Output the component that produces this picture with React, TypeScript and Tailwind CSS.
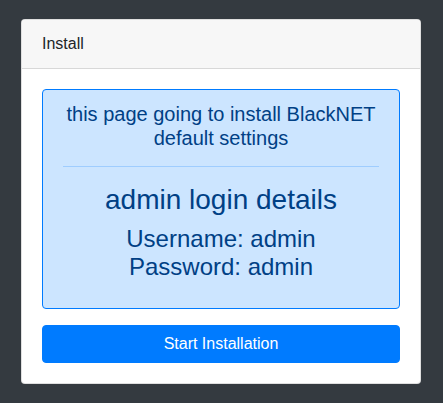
export default function App() {
  return (
    <div className="min-h-screen bg-[#343a40] px-[21px] py-[19px] font-['Liberation_Sans',Arial,sans-serif]">
      <div className="w-[400px] overflow-hidden rounded border border-black/[0.125] bg-white">
        <div className="border-b border-black/[0.125] bg-[#f7f7f7] px-5 py-3 text-[16px] leading-6 text-[#212529]">
          Install
        </div>
        <div className="p-5">
          <div className="rounded border border-[#007bff] bg-[#cce5ff] px-5 pb-[27px] pt-3 text-center text-[#004085]">
            <h5 className="text-[20px] leading-6">this page going to install BlackNET default settings</h5>
            <hr className="my-4 border-t border-[#9fcdff]" />
            <h3 className="mb-2 text-[28px] leading-[33.6px]">admin login details</h3>
            <h4 className="text-[24px] leading-[28px]">
              Username: admin
              <br />
              Password: admin
            </h4>
          </div>
          <button
            type="button"
            className="mt-4 block h-[38px] w-full rounded border border-[#007bff] bg-[#007bff] px-3 text-[16px] leading-6 text-white"
          >
            Start Installation
          </button>
        </div>
      </div>
    </div>
  )
}
